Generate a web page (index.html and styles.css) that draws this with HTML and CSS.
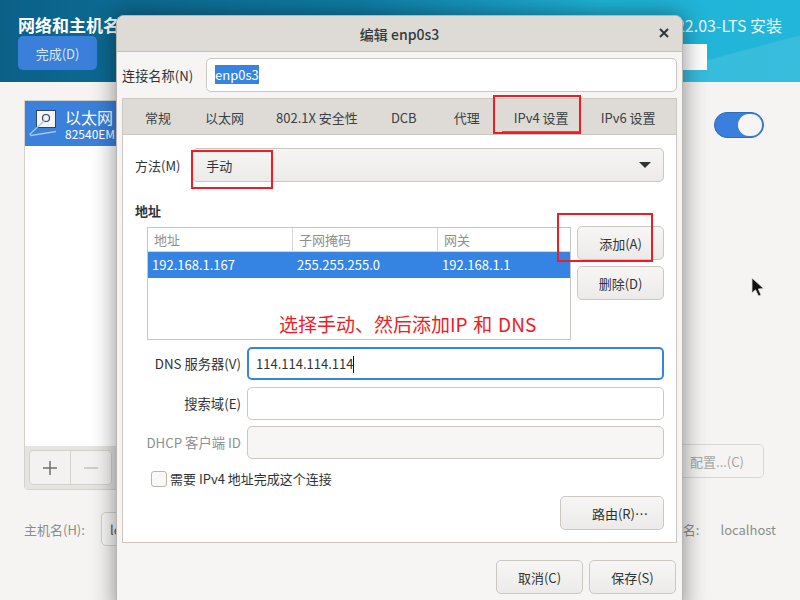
FILE: index.html
```html
<!DOCTYPE html>
<html lang="zh-CN">

<head>
    <meta charset="UTF-8">
    <title>编辑 enp0s3</title>
    <link rel="stylesheet" href="styles.css">
</head>

<body>
    <div class="header">
        <div class="header-left">
            <div class="spoke-title">网络和主机名(N)</div>
            <button class="done-button">完成(D)</button>
        </div>
        <div class="header-right">
            <div class="product-title">openEuler 22.03-LTS 安装</div>
            <div class="keyboard-box"></div>
        </div>
    </div>

    <div class="main">
        <div class="device-row">
            <div class="device-panel">
                <div class="device-list">
                    <div class="device-item">
                        <svg class="device-icon" width="36" height="32" viewBox="0 0 36 32">
                            <rect x="8.500" y="2.500" width="19" height="17" fill="#f4f4f4" stroke="#30455f" stroke-width="1" />
                            <circle cx="18" cy="10" r="3.500" fill="none" stroke="#30455f" stroke-width="1.200" />
                            <path d="M17 12 L2 26 L3 27.500 L28 23.500" fill="none" stroke="#a9c4e8" stroke-width="1.300" />
                        </svg>
                        <div class="device-text">
                            <div class="device-name">以太网</div>
                            <div class="device-model">82540EM</div>
                        </div>
                    </div>
                </div>
                <div class="device-tools">
                    <div class="tool-group">
                        <div class="tool-button">
                            <svg width="16" height="16" viewBox="0 0 16 16">
                                <path d="M8 1 V15 M1 8 H15" stroke="#6f716f" stroke-width="1.500" />
                            </svg>
                        </div>
                        <div class="tool-button">
                            <svg width="16" height="16" viewBox="0 0 16 16">
                                <path d="M1 8 H15" stroke="#c0c0bd" stroke-width="1.500" />
                            </svg>
                        </div>
                    </div>
                </div>
            </div>
            <div class="device-detail">
                <div class="switch"><div class="switch-knob"></div></div>
                <button class="config-button">配置...(C)</button>
            </div>
        </div>
        <div class="host-row">
            <span class="host-label">主机名(H):</span>
            <div class="host-input">localhost</div>
            <span class="host-current">当前主机名:</span>
            <span class="host-value">localhost</span>
        </div>
    </div>

    <div class="dialog">
        <div class="titlebar">
            <span class="titlebar-text">编辑 enp0s3</span>
            <svg class="titlebar-close" width="10" height="10" viewBox="0 0 10 10">
                <path d="M1 1 L9 9 M9 1 L1 9" stroke="#2e3436" stroke-width="2" />
            </svg>
        </div>

        <div class="name-row">
            <label class="name-label">连接名称(N)</label>
            <div class="entry name-entry"><span class="selected-text">enp0s3</span></div>
        </div>

        <div class="notebook">
            <div class="tabs">
                <div class="tab">常规</div>
                <div class="tab">以太网</div>
                <div class="tab tab-security">802.1X 安全性</div>
                <div class="tab">DCB</div>
                <div class="tab tab-proxy">代理</div>
                <div class="tab tab-active">IPv4 设置</div>
                <div class="tab">IPv6 设置</div>
            </div>

            <div class="tab-page">
                <div class="method-row">
                    <span class="method-label">方法(M)</span>
                    <div class="combo">
                        <span>手动</span>
                        <span class="combo-arrow"></span>
                    </div>
                </div>

                <div class="section-title">地址</div>
                <div class="address-row">
                    <div class="address-table">
                        <div class="table-row table-head">
                            <div class="cell">地址</div>
                            <div class="cell">子网掩码</div>
                            <div class="cell">网关</div>
                        </div>
                        <div class="table-row table-selected">
                            <div class="cell">192.168.1.167</div>
                            <div class="cell">255.255.255.0</div>
                            <div class="cell">192.168.1.1</div>
                        </div>
                    </div>
                    <div class="address-buttons">
                        <button class="gtk-button">添加(A)</button>
                        <button class="gtk-button">删除(D)</button>
                    </div>
                </div>

                <div class="form-row">
                    <span class="form-label">DNS 服务器(V)</span>
                    <div class="entry form-entry entry-focus">114.114.114.114<span class="caret"></span></div>
                </div>
                <div class="form-row">
                    <span class="form-label">搜索域(E)</span>
                    <div class="entry form-entry"></div>
                </div>
                <div class="form-row form-row-dhcp">
                    <span class="form-label label-off">DHCP 客户端 ID</span>
                    <div class="entry form-entry entry-off"></div>
                </div>

                <div class="check-row">
                    <span class="checkbox"></span>
                    <span>需要 IPv4 地址完成这个连接</span>
                </div>

                <div class="route-row">
                    <button class="gtk-button route-button">路由(R)…</button>
                </div>
            </div>
        </div>

        <div class="dialog-actions">
            <button class="gtk-button action-button">取消(C)</button>
            <button class="gtk-button action-button">保存(S)</button>
        </div>
    </div>

    <!-- red marks drawn on top of the screenshot -->
    <div class="mark mark-tab"></div>
    <div class="mark mark-method"></div>
    <div class="mark mark-add"></div>
    <div class="mark-note">选择手动、然后添加IP 和 DNS</div>

    <svg class="cursor" width="14" height="22" viewBox="0 0 14 22">
        <path d="M1 1 L1 16 L4.500 12.800 L7.500 19 L10 18 L7.300 12 L12.500 11.500 Z" fill="#111" stroke="#ddd" stroke-width="0.800" />
    </svg>
</body>

</html>
```

FILE: styles.css
```css
* {
    box-sizing: border-box;
}

body {
    margin: 0;
    width: 800px;
    height: 600px;
    overflow: hidden;
    position: relative;
    font-family: "Noto Sans CJK SC", "Noto Sans", sans-serif;
    font-size: 13px;
    color: #2e3436;
    background-color: #f5f4f3;
}

button {
    font-family: inherit;
    font-size: 13px;
}

.header {
    height: 82px;
    display: flex;
    justify-content: space-between;
    padding: 14px 0 0 18px;
    background:
        linear-gradient(165deg, transparent 0, transparent 84%, rgba(255, 255, 255, 0.1) 84.500%),
        linear-gradient(90deg, #0b6088 0, #0f7ea6 45%, #1fb4d8 75%, #22b6d9 100%);
}

.spoke-title {
    font-size: 17px;
    font-weight: 700;
    line-height: 22px;
    color: #ffffff;
}

.done-button {
    display: block;
    width: 79px;
    height: 34px;
    border: none;
    border-radius: 5px;
    color: #dbe7f7;
    background-color: #3a7fd9;
}

.header-right {
    width: 300px;
    padding-right: 18px;
    display: flex;
    flex-direction: column;
    align-items: flex-end;
}

.product-title {
    font-size: 16px;
    line-height: 22px;
    color: #e8f4f8;
}

.keyboard-box {
    width: 118px;
    height: 26px;
    margin: 8px 75px 0 0;
    background-color: #ffffff;
}

.main {
    padding: 18px 24px 0;
}

.device-row {
    display: flex;
    justify-content: space-between;
    height: 390px;
}

.device-panel {
    width: 300px;
    display: flex;
    flex-direction: column;
    border: 1px solid #d5d2ce;
    border-radius: 0 0 4px 4px;
}

.device-list {
    flex: 1;
    background-color: #ffffff;
}

.device-item {
    height: 45px;
    display: flex;
    align-items: center;
    gap: 1px;
    padding-left: 3px;
    color: #ffffff;
    background-color: #3a81dc;
}

.device-text {
    padding-top: 1px;
}

.device-name {
    font-size: 16px;
    line-height: 20px;
    white-space: nowrap;
}

.device-model {
    font-size: 12px;
    line-height: 14px;
    white-space: nowrap;
}

.device-tools {
    height: 43px;
    padding: 4px;
    background-color: #e6e4e1;
}

.tool-group {
    display: flex;
    width: 83px;
    height: 35px;
    border: 1px solid #d5d2ce;
    border-radius: 4px;
    background-color: #f3f2f0;
}

.tool-button {
    flex: 1;
    display: flex;
    align-items: center;
    justify-content: center;
}

.tool-button:first-child {
    border-right: 1px solid #d5d2ce;
}

.device-detail {
    display: flex;
    flex-direction: column;
    align-items: flex-end;
    justify-content: space-between;
    padding: 12px 12px 12px 0;
}

.switch {
    width: 50px;
    height: 26px;
    padding: 1px;
    display: flex;
    justify-content: flex-end;
    border: 1px solid #2a6dc0;
    border-radius: 13px;
    background-color: #3a7fdc;
}

.switch-knob {
    width: 24px;
    height: 22px;
    border-radius: 12px;
    background-color: #f6f5f4;
}

.config-button {
    width: 100px;
    height: 34px;
    padding-left: 12px;
    border: 1px solid #d9d7d3;
    border-radius: 5px;
    color: #a3a5a3;
    background-color: #f5f4f3;
}

.host-row {
    display: flex;
    align-items: center;
    height: 34px;
    margin-top: 22px;
}

.host-label {
    width: 77px;
    color: #8b8d8d;
}

.host-input {
    width: 300px;
    height: 34px;
    padding: 7px 8px;
    border: 1px solid #d5d2ce;
    border-radius: 5px;
    color: #555753;
    background-color: #f8f8f7;
}

.host-current {
    margin-left: auto;
    width: 120px;
    text-align: right;
    color: #8b8d8d;
    white-space: nowrap;
}

.host-value {
    margin-left: 21px;
    color: #8b8d8d;
}

.dialog {
    position: absolute;
    left: 116px;
    top: 15px;
    width: 567px;
    height: 600px;
    padding: 0 5px;
    border-radius: 8px 8px 0 0;
    border: 1px solid #b8b5b1;
    border-bottom: none;
    background-color: #f6f5f4;
    box-shadow: 0 0 24px rgba(0, 0, 0, 0.45);
}

.titlebar {
    position: relative;
    height: 36px;
    margin: 0 -5px;
    display: flex;
    align-items: center;
    justify-content: center;
    border-bottom: 1px solid #c4c0bb;
    border-radius: 7px 7px 0 0;
    background-color: #dedbd7;
}

.titlebar-text {
    font-size: 14px;
    font-weight: 500;
    color: #33393b;
}

.titlebar-close {
    position: absolute;
    right: 13px;
    top: 12px;
}

.name-row {
    display: flex;
    align-items: center;
    gap: 13px;
    height: 34px;
    margin-top: 6px;
}

.name-label {
    width: 71px;
    white-space: nowrap;
    font-size: 13.200px;
}

.entry {
    height: 34px;
    padding: 0 8px;
    line-height: 32px;
    border: 1px solid #cdc7c2;
    border-radius: 5px;
    background-color: #ffffff;
}

.name-entry {
    flex: 1;
}

.selected-text {
    color: #ffffff;
    background-color: #3584e4;
}

.notebook {
    height: 445px;
    margin-top: 6px;
    display: flex;
    flex-direction: column;
    border: 1px solid #cdc7c2;
}

.tabs {
    height: 36px;
    display: flex;
    padding-left: 5px;
    border-bottom: 1px solid #cdc7c2;
    background-color: #dedbd7;
}

.tab {
    padding: 0 17px;
    line-height: 38px;
    white-space: nowrap;
    color: #3b4043;
}

.tab-security {
    padding: 0 16px 0 15px;
}

.tab-proxy {
    padding: 0 17px 0 20px;
}

.tab-active {
    padding: 0 12px;
    margin: 0 3px 0 5px;
    border-bottom: 3px solid #3584e4;
}

.tab-page {
    flex: 1;
    padding: 13px 12px 0 12px;
    background-color: #ffffff;
}

.method-row {
    display: flex;
    align-items: center;
    gap: 12px;
}

.method-label {
    white-space: nowrap;
}

.combo {
    flex: 1;
    height: 34px;
    display: flex;
    align-items: center;
    justify-content: space-between;
    padding: 0 12px 0 13px;
    border: 1px solid #cdc7c2;
    border-radius: 5px;
    background: linear-gradient(#f6f5f4, #edebe9);
}

.combo-arrow {
    width: 0;
    height: 0;
    border-left: 6px solid transparent;
    border-right: 6px solid transparent;
    border-top: 6px solid #2e3436;
}

.section-title {
    margin-top: 19px;
    font-weight: 700;
    line-height: 20px;
}

.address-row {
    display: flex;
    gap: 6px;
    margin-top: 4px;
    padding-left: 12px;
}

.address-table {
    width: 424px;
    height: 113px;
    margin-top: 2px;
    border: 1px solid #c8c5c1;
}

.table-row {
    display: grid;
    grid-template-columns: 145px 145px 1fr;
}

.table-head {
    height: 24px;
    line-height: 24px;
    color: #8d9091;
    border-bottom: 1px solid #d8d6d2;
}

.table-head .cell {
    padding-left: 6px;
    border-right: 1px solid #d8d6d2;
}

.table-head .cell:last-child {
    border-right: none;
}

.table-selected {
    height: 26px;
    line-height: 26px;
    color: #ffffff;
    background-color: #3584e4;
}

.table-selected .cell {
    padding-left: 4px;
}

.address-buttons {
    display: flex;
    flex-direction: column;
    gap: 6px;
    margin-top: 1px;
}

.gtk-button {
    border: 1px solid #cdc7c2;
    border-radius: 5px;
    color: #2e3436;
    background: linear-gradient(#f7f6f5, #edebe9);
}

.address-buttons .gtk-button {
    width: 87px;
    height: 34px;
}

.form-row {
    display: flex;
    align-items: center;
    gap: 6px;
    height: 33px;
    margin-top: 7px;
}

.form-row-dhcp {
    margin-top: 6px;
}

.form-label {
    width: 106px;
    text-align: right;
    white-space: nowrap;
    font-size: 13.300px;
}

.label-off {
    color: #8d9091;
}

.form-entry {
    flex: 1;
    height: 33px;
    line-height: 31px;
}

.entry-focus {
    padding: 0 7px;
    border: 2px solid #3584e4;
    line-height: 29px;
}

.entry-off {
    background-color: #f7f6f5;
}

.caret {
    display: inline-block;
    width: 1px;
    height: 17px;
    vertical-align: -4px;
    background-color: #111111;
}

.check-row {
    display: flex;
    align-items: center;
    gap: 3px;
    margin-top: 10px;
    padding-left: 16px;
    line-height: 20px;
}

.checkbox {
    width: 16px;
    height: 16px;
    border: 1px solid #b8b5b1;
    border-radius: 3px;
    background-color: #f9f9f8;
}

.route-row {
    display: flex;
    justify-content: flex-end;
    margin-top: 7px;
}

.route-button {
    width: 104px;
    height: 34px;
    padding-left: 22px;
}

.dialog-actions {
    display: flex;
    justify-content: flex-end;
    gap: 6px;
    margin-top: 17px;
    padding-right: 1px;
}

.action-button {
    width: 87px;
    height: 34px;
}

.mark {
    position: absolute;
    border: 2px solid #ee1c25;
}

.mark-tab {
    left: 493px;
    top: 95px;
    width: 88px;
    height: 39px;
}

.mark-method {
    left: 191px;
    top: 150px;
    width: 82px;
    height: 39px;
}

.mark-add {
    left: 557px;
    top: 213px;
    width: 96px;
    height: 49px;
}

.mark-note {
    position: absolute;
    left: 279px;
    top: 311px;
    font-size: 19px;
    line-height: 26px;
    word-spacing: 1.500px;
    color: #ee1c25;
}

.cursor {
    position: absolute;
    left: 751px;
    top: 277px;
}
```
